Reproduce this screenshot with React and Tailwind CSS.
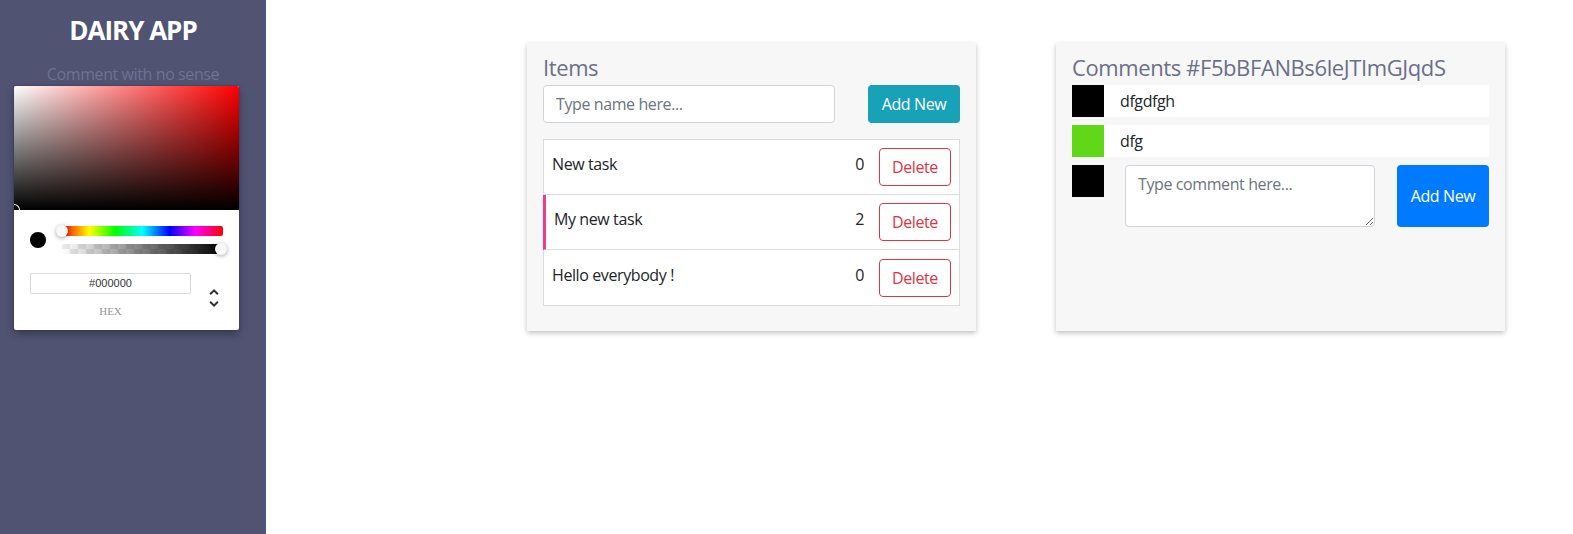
import React from "react";

function ChromePicker() {
  return (
    <div className="ml-[14px] w-[225px] rounded-[2px] bg-white tracking-normal shadow-[0_0_2px_rgba(0,0,0,0.3),0_4px_8px_rgba(0,0,0,0.3)]">
      <div className="relative h-[124px] overflow-hidden rounded-t-[2px] bg-[#ff0000]">
        <div className="absolute inset-0 bg-[linear-gradient(to_right,#fff,rgba(255,255,255,0))]" />
        <div className="absolute inset-0 bg-[linear-gradient(to_top,#000,rgba(0,0,0,0))]" />
        <div className="absolute bottom-[-6px] left-[-6px] h-3 w-3 rounded-full shadow-[inset_0_0_0_1px_#fff]" />
      </div>
      <div className="px-4 pb-[13px] pt-4">
        <div className="flex">
          <div className="w-8">
            <div className="mt-[6px] h-4 w-4 rounded-full bg-black shadow-[inset_0_0_0_1px_rgba(0,0,0,0.1)]" />
          </div>
          <div className="flex-1">
            <div className="relative mb-2 h-[10px] rounded-[2px] bg-[linear-gradient(to_right,#f00_0%,#ff0_17%,#0f0_33%,#0ff_50%,#00f_67%,#f0f_83%,#f00_100%)]">
              <div className="absolute left-[-6px] top-[-1px] h-3 w-3 rounded-full bg-[#f8f8f8] shadow-[0_1px_4px_0_rgba(0,0,0,0.37)]" />
            </div>
            <div className="relative h-[10px] rounded-[2px] bg-white">
              <div className="absolute inset-0 rounded-[2px] bg-[conic-gradient(from_270deg,rgba(0,0,0,0.08)_25%,transparent_0_50%,rgba(0,0,0,0.08)_0_75%,transparent_0)] bg-[length:16px_10px]" />
              <div className="absolute inset-0 rounded-[2px] bg-[linear-gradient(to_right,rgba(0,0,0,0),#000)]" />
              <div className="absolute right-[-4px] top-[-1px] h-3 w-3 rounded-full bg-[#f8f8f8] shadow-[0_1px_4px_0_rgba(0,0,0,0.37)]" />
            </div>
          </div>
        </div>
        <div className="flex pt-[19px]">
          <div className="ml-[-6px] flex-1">
            <div className="w-full pl-[6px]">
              <div className="flex h-[21px] w-full items-center justify-center rounded-[2px] font-['Liberation_Sans',Arial,sans-serif] text-[11px] text-[#333] shadow-[inset_0_0_0_1px_#dadada]">
                #000000
              </div>
              <span className="mt-3 block text-center font-['Liberation_Serif',serif] text-[11px] uppercase leading-[11px] text-[#969696]">
                hex
              </span>
            </div>
          </div>
          <div className="relative w-8 text-right">
            <div className="relative mr-[-4px] mt-3 inline-block">
              <svg viewBox="0 0 24 24" className="h-[26px] w-[26px] rounded-[5px] border border-transparent">
                <path
                  fill="#333"
                  d="M12,18.17L8.83,15L7.42,16.41L12,21L16.59,16.41L15.17,15M12,5.83L15.17,9L16.59,7.58L12,3L7.42,7.58L8.83,9L12,5.83Z"
                />
              </svg>
            </div>
          </div>
        </div>
      </div>
    </div>
  );
}

const items = [
  { name: "New task", count: 0, active: false },
  { name: "My new task", count: 2, active: true },
  { name: "Hello everybody !", count: 0, active: false },
];

function ItemsCard() {
  return (
    <section className="h-[288px] w-[449px] shrink-0 bg-[#f7f7f7] px-4 pt-[11px] shadow-[0_2px_5px_rgba(0,0,0,0.25)]">
      <h2 className="mb-[5px] text-[22px] leading-[26px] text-[#6b6f88]">Items</h2>
      <div className="flex items-center justify-between">
        <input
          placeholder="Type name here..."
          className="h-[38px] w-[292px] rounded-[4px] border border-[#ced4da] bg-white px-3 text-[16px] text-[#495057] outline-none placeholder:text-[#6c757d]"
        />
        <button className="h-[38px] w-[92px] rounded-[4px] bg-[#17a2b8] text-[16px] text-white">Add New</button>
      </div>
      <ul className="mt-4 divide-y divide-[#dcdcdc] border border-[#dcdcdc] bg-white">
        {items.map((it) => (
          <li
            key={it.name}
            className={
              it.active
                ? "ml-[-1px] flex h-[55px] items-center border-l-[3px] border-l-[#e83e8c] pl-2 pr-2"
                : "flex h-[55px] items-center pl-2 pr-2"
            }
          >
            <span className="mb-[6px] text-[16px] leading-[24px] text-[#212529]">{it.name}</span>
            <span className="mb-[6px] ml-auto mr-[15px] text-[16px] leading-[24px] text-[#212529]">{it.count}</span>
            <button className="h-[38px] w-[72px] rounded-[4px] border border-[#dc3545] text-[16px] text-[#dc3545]">
              Delete
            </button>
          </li>
        ))}
      </ul>
    </section>
  );
}

function CommentsCard() {
  return (
    <section className="h-[288px] w-[449px] shrink-0 bg-[#f7f7f7] px-4 pt-[11px] shadow-[0_2px_5px_rgba(0,0,0,0.25)]">
      <h2 className="mb-[5px] text-[22px] leading-[26px] text-[#6b6f88]">Comments #F5bBFANBs6leJTImGJqdS</h2>
      <div className="flex flex-col gap-2">
        <div className="flex h-8 items-center bg-white">
          <div className="h-8 w-8 bg-black" />
          <span className="pl-4 text-[16px] leading-[32px] text-[#212529]">dfgdfgh</span>
        </div>
        <div className="flex h-8 items-center bg-white">
          <div className="h-8 w-8 bg-[#61d817]" />
          <span className="pl-4 text-[16px] leading-[32px] text-[#212529]">dfg</span>
        </div>
        <div className="flex items-start">
          <div className="h-8 w-8 shrink-0 bg-black" />
          <textarea
            placeholder="Type comment here..."
            className="ml-[21px] h-[62px] w-[250px] rounded-[4px] border border-[#ced4da] bg-white px-3 py-[6px] text-[16px] leading-[24px] text-[#495057] outline-none placeholder:text-[#6c757d]"
          />
          <button className="ml-auto h-[62px] w-[92px] rounded-[4px] bg-[#007bff] text-[16px] text-white">Add New</button>
        </div>
      </div>
    </section>
  );
}

export default function App() {
  return (
    <div className="flex min-h-[534px] w-full bg-white font-['Open_Sans',sans-serif] tracking-[-0.4px]">
      <aside className="w-[266px] shrink-0 bg-[#505372] pt-[14px]">
        <h1 className="text-center text-[26px] font-bold leading-[32px] tracking-[-1px] text-white">DAIRY APP</h1>
        <p className="mt-[16px] text-center text-[16px] leading-[24px] text-[#6f7293]">Comment with no sense</p>
        <ChromePicker />
      </aside>
      <main className="flex flex-1 items-start gap-[80px] pl-[261px] pt-[43px]">
        <ItemsCard />
        <CommentsCard />
      </main>
    </div>
  );
}
